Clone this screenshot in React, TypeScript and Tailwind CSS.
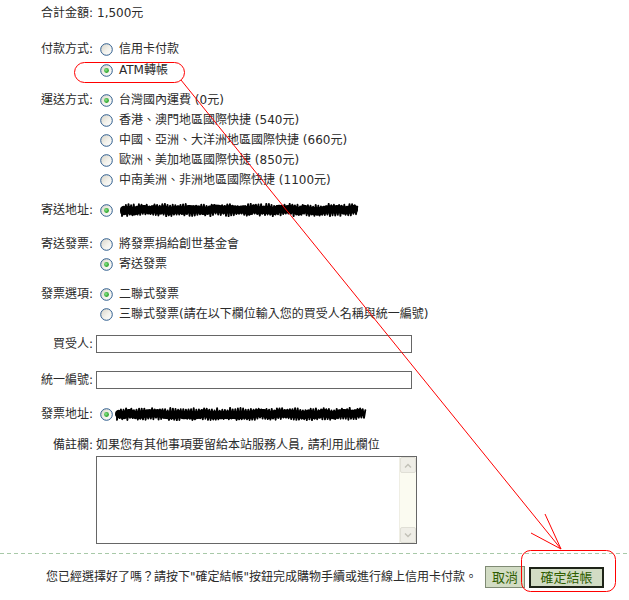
import React from "react";

function Radio({ checked }: { checked?: boolean }) {
  return (
    <svg width="13" height="13" viewBox="0 0 13 13" className="shrink-0">
      <defs>
        <linearGradient id="rgBg" x1="0" y1="0" x2="1" y2="1">
          <stop offset="0" stopColor="#d6d3c8" />
          <stop offset="0.55" stopColor="#f3f2ec" />
          <stop offset="1" stopColor="#ffffff" />
        </linearGradient>
        <radialGradient id="rgDot" cx="0.4" cy="0.4" r="0.6">
          <stop offset="0" stopColor="#8ee88e" />
          <stop offset="1" stopColor="#1f9b1f" />
        </radialGradient>
      </defs>
      <circle cx="6.5" cy="6.5" r="5.8" fill="url(#rgBg)" stroke="#2f5d8e" strokeWidth="1" />
      {checked && <circle cx="6.5" cy="6.5" r="2.4" fill="url(#rgDot)" />}
    </svg>
  );
}

function Scribble({ w, seed }: { w: number; seed: number }) {
  let s = seed;
  const rnd = () => {
    s = (s * 9301 + 49297) % 233280;
    return s / 233280;
  };
  let d = "M2 7";
  let i = 0;
  for (let x = 2; x < w - 2; x += 1.3) {
    const y = i % 2 ? 0.8 + rnd() * 3 : 10.5 + rnd() * 2.8;
    d += ` L${x.toFixed(1)} ${y.toFixed(1)}`;
    i++;
  }
  let d2 = "M4 7";
  for (let x = 4; x < w - 4; x += 5) {
    d2 += ` L${x} ${(5.5 + rnd() * 3).toFixed(1)}`;
  }
  return (
    <svg width={w} height="14" viewBox={`0 0 ${w} 14`} className="shrink-0">
      <path d={d} fill="none" stroke="#000" strokeWidth="1.9" strokeLinejoin="round" strokeLinecap="round" />
      <path d={d2} fill="none" stroke="#000" strokeWidth="8" strokeLinejoin="round" strokeLinecap="round" />
    </svg>
  );
}

function Row({
  label,
  className = "",
  alignCenter = false,
  children,
}: {
  label: string;
  className?: string;
  alignCenter?: boolean;
  children: React.ReactNode;
}) {
  return (
    <div className={`flex ${alignCenter ? "items-center" : "items-start"} ${className}`}>
      <div className="w-[93px] shrink-0 text-right leading-[20px] whitespace-nowrap">{label}</div>
      <div className="ml-[3px] flex flex-col">{children}</div>
    </div>
  );
}

function Option({ checked, children }: { checked?: boolean; children: React.ReactNode }) {
  return (
    <div className="flex items-center h-[20px] leading-[20px] whitespace-nowrap">
      <div className="ml-[4px]">
        <Radio checked={checked} />
      </div>
      <span className="ml-[6px]">{children}</span>
    </div>
  );
}

function ScrollArrow({ up }: { up?: boolean }) {
  return (
    <div className="h-[16px] w-[16px] rounded-[2px] border border-[#e0dfd6] bg-[#efeee7] flex items-center justify-center">
      <svg width="8" height="5" viewBox="0 0 8 5">
        <path
          d={up ? "M1 4.5 L4 1.5 L7 4.5" : "M1 0.5 L4 3.5 L7 0.5"}
          fill="none"
          stroke="#c2c1b7"
          strokeWidth="1.4"
        />
      </svg>
    </div>
  );
}

export default function App() {
  return (
    <div className="relative w-[629px] h-[600px] overflow-hidden bg-white text-[12px] text-[#2a2a2a] [font-family:'DejaVu_Sans','Noto_Sans_CJK_TC',sans-serif]">
      <div className="flex flex-col">
        <Row label="合計金額:" className="mt-[3px]">
          <span className="pl-[1px] leading-[20px] whitespace-nowrap">1,500元</span>
        </Row>

        <Row label="付款方式:" className="mt-[16px]">
          <div className="flex flex-col gap-[1px]">
            <Option>信用卡付款</Option>
            <Option checked>ATM轉帳</Option>
          </div>
        </Row>

        <Row label="運送方式:" className="mt-[10px]">
          <Option checked>台灣國內運費 (0元)</Option>
          <Option>香港、澳門地區國際快捷 (540元)</Option>
          <Option>中國、亞洲、大洋洲地區國際快捷 (660元)</Option>
          <Option>歐洲、美加地區國際快捷 (850元)</Option>
          <Option>中南美洲、非洲地區國際快捷 (1100元)</Option>
        </Row>

        <Row label="寄送地址:" className="mt-[10px]">
          <div className="flex items-center h-[20px]">
            <div className="ml-[4px]">
              <Radio checked />
            </div>
            <div className="ml-[7px]">
              <Scribble w={240} seed={17} />
            </div>
          </div>
        </Row>

        <Row label="寄送發票:" className="mt-[14px]">
          <Option>將發票捐給創世基金會</Option>
          <Option checked>寄送發票</Option>
        </Row>

        <Row label="發票選項:" className="mt-[10px]">
          <Option checked>二聯式發票</Option>
          <Option>三聯式發票(請在以下欄位輸入您的買受人名稱與統一編號)</Option>
        </Row>

        <Row label="買受人:" className="mt-[10px]" alignCenter>
          <input
            readOnly
            className="w-[316px] h-[18px] border border-[#666] bg-white outline-none"
          />
        </Row>

        <Row label="統一編號:" className="mt-[16px]" alignCenter>
          <input
            readOnly
            className="w-[316px] h-[18px] border border-[#666] bg-white outline-none"
          />
        </Row>

        <Row label="發票地址:" className="mt-[14px]">
          <div className="flex items-center h-[20px]">
            <div className="ml-[4px]">
              <Radio checked />
            </div>
            <div className="ml-[2px]">
              <Scribble w={253} seed={41} />
            </div>
          </div>
        </Row>

        <Row label="備註欄:" className="mt-[11px]">
          <span className="leading-[20px] whitespace-nowrap">
            如果您有其他事項要留給本站服務人員, 請利用此欄位
          </span>
          <div className="mt-[1px] w-[321px] h-[88px] border border-[#666] flex bg-white">
            <div className="flex-1" />
            <div className="w-[17px] flex flex-col bg-[#fbfbf1] border-l border-[#efeee4]">
              <ScrollArrow up />
              <div className="flex-1" />
              <ScrollArrow />
            </div>
          </div>
        </Row>

        <div className="mt-[9px] h-[1px] w-full bg-[repeating-linear-gradient(to_right,#a8c9a8_0px,#a8c9a8_4px,transparent_4px,transparent_7px)]" />

        <div className="mt-[12px] flex items-center justify-end pr-[25px]">
          <span className="whitespace-nowrap leading-[20px]">
            您已經選擇好了嗎？請按下"確定結帳"按鈕完成購物手續或進行線上信用卡付款。
          </span>
          <button className="ml-[8px] w-[40px] h-[22px] border border-[#7f8a74] bg-[#d2dcc4] text-[#2f5d00] text-[13px] leading-none">
            取消
          </button>
          <button className="ml-[4px] w-[75px] h-[21px] border-2 border-[#1e2418] bg-[#d2dcc4] text-[#2f5d00] text-[13px] leading-none">
            確定結帳
          </button>
        </div>

        <div className="mt-[13px] h-[2px] w-full bg-[#a3d3a0]" />
      </div>

      <svg
        className="absolute left-0 top-0 pointer-events-none"
        width="629"
        height="600"
        viewBox="0 0 629 600"
      >
        <rect x="74.5" y="62.5" width="110" height="20" rx="10" fill="none" stroke="#ff0000" strokeWidth="1" />
        <line x1="181" y1="80" x2="561" y2="549" stroke="#ff0000" strokeWidth="1" />
        <line x1="545" y1="514" x2="561" y2="549" stroke="#ff0000" strokeWidth="1" />
        <line x1="531" y1="533" x2="561" y2="549" stroke="#ff0000" strokeWidth="1" />
        <rect x="521.5" y="550.5" width="94" height="41" rx="9" fill="none" stroke="#ff0000" strokeWidth="1" />
      </svg>
    </div>
  );
}
